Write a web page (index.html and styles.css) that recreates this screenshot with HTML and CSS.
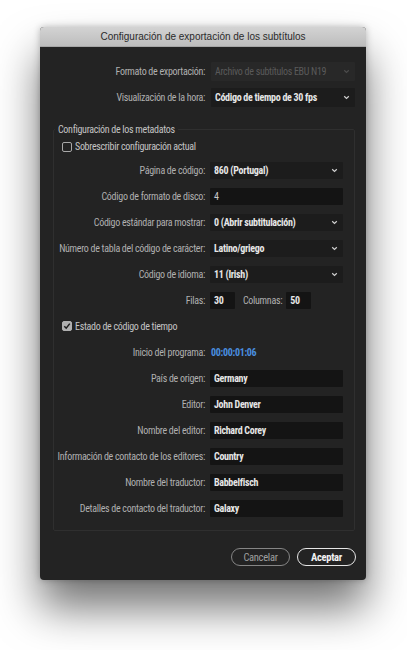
FILE: index.html
```html
<!DOCTYPE html>
<html lang="es">
<head>
<meta charset="utf-8">
<title>Configuración de exportación de los subtítulos</title>
<link rel="stylesheet" href="styles.css">
</head>
<body>
<div class="dialog">
  <div class="titlebar">Configuración de exportación de los subtítulos</div>
  <div class="content">
    <div class="row top">
      <span class="lbl">Formato de exportación:</span>
      <div class="select disabled"><span class="val">Archivo de subtítulos EBU N19</span><svg class="chev" width="7" height="5" viewBox="0 0 7 5"><path d="M1.2 1.2 L3.5 3.4 L5.8 1.2" fill="none" stroke-width="1.2"/></svg></div>
    </div>
    <div class="row top">
      <span class="lbl">Visualización de la hora:</span>
      <div class="select"><span class="val">Código de tiempo de 30 fps</span><svg class="chev" width="7" height="5" viewBox="0 0 7 5"><path d="M1.2 1.2 L3.5 3.4 L5.8 1.2" fill="none" stroke-width="1.2"/></svg></div>
    </div>

    <fieldset class="group">
      <legend>Configuración de los metadatos</legend>
      <div class="check-row"><span class="cb"></span><span class="cb-text">Sobrescribir configuración actual</span></div>

      <div class="row">
        <span class="lbl">Página de código:</span>
        <div class="select"><span class="val">860 (Portugal)</span><svg class="chev" width="7" height="5" viewBox="0 0 7 5"><path d="M1.2 1.2 L3.5 3.4 L5.8 1.2" fill="none" stroke-width="1.2"/></svg></div>
      </div>
      <div class="row">
        <span class="lbl">Código de formato de disco:</span>
        <div class="input"><span class="val light">4</span></div>
      </div>
      <div class="row">
        <span class="lbl">Código estándar para mostrar:</span>
        <div class="select"><span class="val">0 (Abrir subtitulación)</span><svg class="chev" width="7" height="5" viewBox="0 0 7 5"><path d="M1.2 1.2 L3.5 3.4 L5.8 1.2" fill="none" stroke-width="1.2"/></svg></div>
      </div>
      <div class="row">
        <span class="lbl">Número de tabla del código de carácter:</span>
        <div class="select"><span class="val">Latino/griego</span><svg class="chev" width="7" height="5" viewBox="0 0 7 5"><path d="M1.2 1.2 L3.5 3.4 L5.8 1.2" fill="none" stroke-width="1.2"/></svg></div>
      </div>
      <div class="row">
        <span class="lbl">Código de idioma:</span>
        <div class="select"><span class="val">11 (Irish)</span><svg class="chev" width="7" height="5" viewBox="0 0 7 5"><path d="M1.2 1.2 L3.5 3.4 L5.8 1.2" fill="none" stroke-width="1.2"/></svg></div>
      </div>
      <div class="row">
        <span class="lbl">Filas:</span>
        <div class="input small"><span class="val">30</span></div>
        <span class="lbl2">Columnas:</span>
        <div class="input small"><span class="val">50</span></div>
      </div>

      <div class="check-row tc"><span class="cb checked"><svg width="10" height="10" viewBox="0 0 10 10"><path d="M2.3 5.2 L4.2 7.2 L7.8 2.6" fill="none" stroke="#1e1e1e" stroke-width="1.5"/></svg></span><span class="cb-text">Estado de código de tiempo</span></div>

      <div class="row">
        <span class="lbl">Inicio del programa:</span>
        <span class="timecode">00:00:01:06</span>
      </div>
      <div class="row">
        <span class="lbl">País de origen:</span>
        <div class="input"><span class="val">Germany</span></div>
      </div>
      <div class="row">
        <span class="lbl">Editor:</span>
        <div class="input"><span class="val">John Denver</span></div>
      </div>
      <div class="row">
        <span class="lbl">Nombre del editor:</span>
        <div class="input"><span class="val">Richard Corey</span></div>
      </div>
      <div class="row">
        <span class="lbl">Información de contacto de los editores:</span>
        <div class="input"><span class="val">Country</span></div>
      </div>
      <div class="row">
        <span class="lbl">Nombre del traductor:</span>
        <div class="input"><span class="val">Babbelfisch</span></div>
      </div>
      <div class="row">
        <span class="lbl">Detalles de contacto del traductor:</span>
        <div class="input"><span class="val">Galaxy</span></div>
      </div>
    </fieldset>

    <div class="buttons">
      <button class="btn cancel">Cancelar</button>
      <button class="btn ok">Aceptar</button>
    </div>
  </div>
</div>
</body>
</html>
```
FILE: styles.css
```css
html, body {
  margin: 0;
  padding: 0;
  background: #ffffff;
}

body {
  width: 407px;
  height: 650px;
  overflow: hidden;
  font-family: "Roboto Condensed", "Open Sans", Roboto, "DejaVu Sans Condensed", sans-serif;
  font-stretch: 75%;
  font-size: 10px;
  letter-spacing: -0.3px;
}

.dialog {
  margin: 27px 0 0 40px;
  width: 326px;
  height: 553px;
  border-radius: 4px;
  overflow: hidden;
  background: #232323;
  box-shadow: 0 28px 44px rgba(0, 0, 0, 0.55), 0 0 7px rgba(0, 0, 0, 0.25);
  display: flex;
  flex-direction: column;
}

.titlebar {
  height: 20px;
  line-height: 20px;
  flex: none;
  text-align: center;
  color: #2b2b2b;
  font-family: "Liberation Sans", sans-serif;
  font-stretch: normal;
  letter-spacing: 0;
  font-size: 10px;
  background: linear-gradient(#d3d3d3, #bdbdbd);
  border-bottom: 1px solid #a6a6a6;
  box-sizing: border-box;
}

.content {
  padding: 14px 11px 0 0;
  display: flex;
  flex-direction: column;
}

.row {
  display: flex;
  align-items: center;
  height: 26px;
}

.row.top {
  height: 20px;
  margin-bottom: 6px;
}

.lbl {
  width: 150px;
  flex: none;
  text-align: right;
  color: #b0b0b0;
  margin-right: 5px;
  white-space: nowrap;
}

.row.top .lbl {
  width: 165px;
  margin-right: 6px;
}

.lbl2 {
  color: #b0b0b0;
  margin: 0 4px 0 8px;
}

.select, .input {
  flex: 1;
  height: 17px;
  display: flex;
  align-items: center;
  justify-content: space-between;
  padding: 0 5px 0 4px;
  box-sizing: border-box;
  background: #1c1c1c;
  border-radius: 1px;
}

.row.top .select {
  height: 19px;
}

.input {
  background: #141414;
}

.input.small {
  flex: none;
  width: 25px;
}

.val {
  color: #e6e6e6;
  font-weight: bold;
  white-space: nowrap;
}

.val.light {
  font-weight: normal;
  color: #c8c8c8;
}

.chev path {
  stroke: #d0d0d0;
}

.select.disabled {
  background: #282828;
}

.select.disabled .val {
  color: #5a5a5a;
  font-weight: normal;
}

.select.disabled .chev path {
  stroke: #4c4c4c;
}

.group {
  margin: 10px 0 0 13px;
  padding: 0 11px 9px 1px;
  border: 1px solid #2f2f2f;
  border-radius: 2px;
}

.group legend {
  padding: 0 3px;
  margin-left: 0;
  line-height: 13px;
  color: #c4c4c4;
}

.check-row {
  display: flex;
  align-items: center;
  height: 21px;
  padding-left: 7px;
}

.check-row.tc {
  height: 26px;
}

.cb {
  width: 10px;
  height: 10px;
  box-sizing: border-box;
  border: 1px solid #a8a8a8;
  border-radius: 2px;
  margin-right: 3px;
  display: flex;
}

.cb.checked {
  background: #b0b0b0;
  border-color: #b0b0b0;
}

.cb.checked svg {
  margin: -1px;
}

.cb-text {
  color: #c4c4c4;
}

.timecode {
  color: #4a8fe0;
  font-weight: bold;
  padding-left: 1px;
}

.buttons {
  display: flex;
  justify-content: flex-end;
  gap: 7px;
  margin-top: 17px;
  margin-right: -1px;
}

.btn {
  height: 18px;
  width: 59px;
  border-radius: 9px;
  background: transparent;
  font-family: inherit;
  font-stretch: inherit;
  letter-spacing: inherit;
  font-size: 10.5px;
  padding: 0;
  box-sizing: border-box;
}

.btn.cancel {
  border: 1.5px solid #858585;
  color: #a0a0a0;
}

.btn.ok {
  border: 1.5px solid #e6e6e6;
  color: #f2f2f2;
  font-weight: bold;
}
```
